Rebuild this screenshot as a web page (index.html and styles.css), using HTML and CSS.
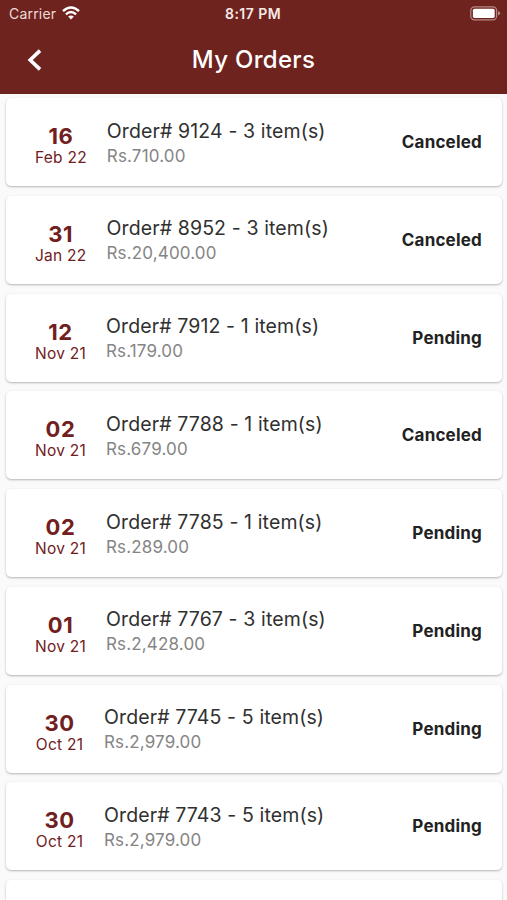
FILE: index.html
```html
<!DOCTYPE html>
<html lang="en">
<head>
  <meta charset="UTF-8" />
  <meta name="viewport" content="width=device-width, initial-scale=1.0" />
  <title>My Orders</title>
  <link rel="stylesheet" href="styles.css">
</head>
<body>
  <header class="header">
    <div class="status-bar">
      <div class="carrier">
        <span>Carrier</span>
        <svg class="wifi" viewBox="0 0 18 14" width="18" height="14">
          <path d="M1 5.2Q9 -2.2 17 5.2" fill="none" stroke="#fff" stroke-width="2.5" />
          <path d="M3.9 8.3Q9 3.7 14.1 8.3" fill="none" stroke="#fff" stroke-width="2.3" />
          <path d="M6.1 10.6Q9 8.2 11.9 10.6L9 13.6Z" fill="#fff" />
        </svg>
      </div>
      <div class="time">8:17 PM</div>
      <div class="battery">
        <svg viewBox="0 0 31 15" width="31" height="15">
          <rect x="0.8" y="0.8" width="25.8" height="13" rx="3.6" fill="none" stroke="#b58783" stroke-width="1.2" />
          <rect x="2.9" y="2.7" width="21.8" height="9.2" rx="1.6" fill="#fff" />
          <path d="M28 5.1Q30.2 5.8 30.2 7.3T28 9.5Z" fill="#b58783" />
        </svg>
      </div>
    </div>
    <div class="nav-bar">
      <button class="back-btn" aria-label="Back">
        <svg viewBox="0 0 15 22" width="15" height="22">
          <path d="M13 1.6L3.2 11L13 20.4" fill="none" stroke="#fff" stroke-width="3.6" />
        </svg>
      </button>
      <h1>My Orders</h1>
    </div>
  </header>

  <main class="orders">
    <div class="order">
      <div class="date"><div class="day">16</div><div class="month">Feb 22</div></div>
      <div class="info"><div class="name">Order# 9124 - 3 item(s)</div><div class="price">Rs.710.00</div></div>
      <div class="status">Canceled</div>
    </div>
    <div class="order">
      <div class="date"><div class="day">31</div><div class="month">Jan 22</div></div>
      <div class="info"><div class="name">Order# 8952 - 3 item(s)</div><div class="price">Rs.20,400.00</div></div>
      <div class="status">Canceled</div>
    </div>
    <div class="order">
      <div class="date"><div class="day">12</div><div class="month">Nov 21</div></div>
      <div class="info"><div class="name">Order# 7912 - 1 item(s)</div><div class="price">Rs.179.00</div></div>
      <div class="status">Pending</div>
    </div>
    <div class="order">
      <div class="date"><div class="day">02</div><div class="month">Nov 21</div></div>
      <div class="info"><div class="name">Order# 7788 - 1 item(s)</div><div class="price">Rs.679.00</div></div>
      <div class="status">Canceled</div>
    </div>
    <div class="order">
      <div class="date"><div class="day">02</div><div class="month">Nov 21</div></div>
      <div class="info"><div class="name">Order# 7785 - 1 item(s)</div><div class="price">Rs.289.00</div></div>
      <div class="status">Pending</div>
    </div>
    <div class="order">
      <div class="date"><div class="day">01</div><div class="month">Nov 21</div></div>
      <div class="info"><div class="name">Order# 7767 - 3 item(s)</div><div class="price">Rs.2,428.00</div></div>
      <div class="status">Pending</div>
    </div>
    <div class="order">
      <div class="date"><div class="day">30</div><div class="month">Oct 21</div></div>
      <div class="info"><div class="name">Order# 7745 - 5 item(s)</div><div class="price">Rs.2,979.00</div></div>
      <div class="status">Pending</div>
    </div>
    <div class="order">
      <div class="date"><div class="day">30</div><div class="month">Oct 21</div></div>
      <div class="info"><div class="name">Order# 7743 - 5 item(s)</div><div class="price">Rs.2,979.00</div></div>
      <div class="status">Pending</div>
    </div>
    <div class="order next"></div>
  </main>
</body>
</html>
```
FILE: styles.css
```css
* {
  box-sizing: border-box;
}
body {
  margin: 0;
  height: 900px;
  overflow: hidden;
  background: #fafafa;
  font-family: Inter, "Liberation Sans", sans-serif;
}
.header {
  height: 94px;
  background: #6f231e;
  color: #fff;
}
.status-bar {
  display: grid;
  grid-template-columns: 1fr auto 1fr;
  align-items: center;
  height: 27px;
  padding: 0 6px 0 9px;
}
.carrier {
  display: flex;
  align-items: center;
  gap: 6px;
  font-size: 14px;
  letter-spacing: 0.2px;
  color: #eedbd8;
}
.wifi {
  margin-top: -2px;
}
.time {
  margin-right: 4px;
  font-size: 14px;
  font-weight: 600;
  letter-spacing: 0.45px;
  color: #f7e9e6;
}
.battery {
  display: flex;
  justify-content: flex-end;
}
.nav-bar {
  display: grid;
  grid-template-columns: 60px 1fr 60px;
  align-items: center;
  height: 65px;
}
.back-btn {
  display: flex;
  padding: 0 0 0 27px;
  border: none;
  background: none;
}
.nav-bar h1 {
  margin: 0;
  text-align: center;
  font-size: 24px;
  font-weight: 500;
  letter-spacing: 0.3px;
}
.orders {
  display: flex;
  flex-direction: column;
  gap: 9.74px;
  height: 806px;
  padding: 4.2px 5px 0 6px;
  overflow: hidden;
}
.order {
  display: flex;
  flex: none;
  align-items: center;
  height: 88px;
  padding: 0 20px 0 29px;
  background: #fff;
  border-radius: 5px;
  box-shadow: 0 1px 2px rgba(0, 0, 0, 0.25), 0 1px 4px rgba(0, 0, 0, 0.04);
}
/* only the top edge of the next card shows */
.next {
  flex: 1;
  height: auto;
  border-radius: 5px 5px 0 0;
}
.date {
  min-width: 49px;
  margin-right: 20px;
  padding-top: 8px;
  text-align: center;
  color: #71201d;
}
.day {
  font-size: 22px;
  line-height: 24px;
  font-weight: 700;
  letter-spacing: 0.6px;
}
.month {
  font-size: 15.5px;
  line-height: 20px;
  letter-spacing: 0.25px;
}
.info {
  flex: 1;
  padding-top: 3px;
}
.name {
  font-size: 19.5px;
  line-height: 25px;
  letter-spacing: 0.12px;
  color: #303030;
}
.price {
  font-size: 17px;
  line-height: 25px;
  letter-spacing: 0.15px;
  color: #858585;
}
.status {
  font-size: 17px;
  font-weight: 700;
  letter-spacing: 0.2px;
  color: #222;
}
```
